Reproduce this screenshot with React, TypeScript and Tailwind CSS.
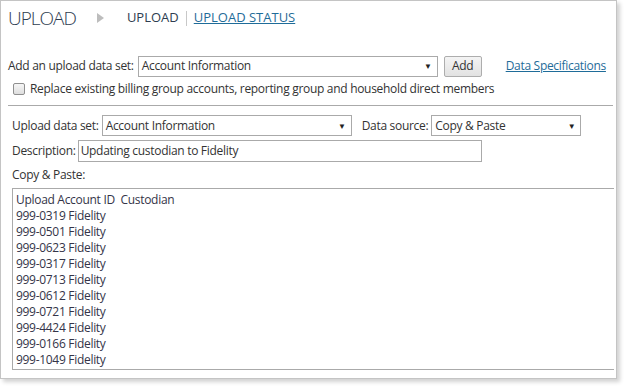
export default function App() {
  const rows = [
    "999-0319 Fidelity",
    "999-0501 Fidelity",
    "999-0623 Fidelity",
    "999-0317 Fidelity",
    "999-0713 Fidelity",
    "999-0612 Fidelity",
    "999-0721 Fidelity",
    "999-4424 Fidelity",
    "999-0166 Fidelity",
    "999-1049 Fidelity",
  ];

  return (
    <div className="w-[626px] h-[388px] bg-white font-['Open_Sans',sans-serif] text-[12px] tracking-[-0.3px] text-[#333] whitespace-nowrap">
      <div className="w-[617px] h-[379px] border border-[#c4c4c4] bg-white shadow-[3px_3px_4px_rgba(0,0,0,0.18)] overflow-hidden">
        {/* header */}
        <div className="flex items-center h-[34px] pl-[7px]">
          <span className="text-[19px] font-light text-[#2e3d50] tracking-[-1px]">UPLOAD</span>
          <span className="ml-[21px] mr-[23px] w-0 h-0 border-y-[5px] border-y-transparent border-l-[7px] border-l-[#bdbdbd]" />
          <span className="text-[13px] text-[#2e3d50] tracking-[0px]">UPLOAD</span>
          <span className="mx-[7px] w-px h-[15px] bg-[#c8c8c8]" />
          <span className="text-[13px] text-[#1f6c99] underline tracking-[0px]">UPLOAD STATUS</span>
        </div>

        <div className="pl-[7px] pt-[20px]">
          <div className="flex items-center h-[22px]">
            <span>Add an upload data set:</span>
            <div className="ml-[4px] w-[300px] h-[21px] border border-[#aaa] flex items-center justify-between px-[3px]">
              <span>Account Information</span>
              <span className="text-[8px] text-[#222] mr-[2px]">▼</span>
            </div>
            <button className="ml-[6px] w-[38px] h-[21px] border border-[#adadad] rounded-[2px] bg-gradient-to-b from-[#f4f4f4] to-[#e2e2e2] text-[#333]">
              Add
            </button>
            <span className="ml-[24px] text-[#1f6c99] underline">Data Specifications</span>
          </div>
          <div className="flex items-center mt-[3px] pl-[5px] h-[18px]">
            <span className="w-[12px] h-[12px] border border-[#8f8f8f] rounded-[2px] bg-gradient-to-b from-[#f6f6f6] to-[#dedede]" />
            <span className="ml-[5px]">Replace existing billing group accounts, reporting group and household direct members</span>
          </div>
        </div>

        <div className="ml-[7px] mr-[3px] mt-[7px] border-t border-[#aaa]" />

        <div className="pl-[11px] pt-[9px]">
          <div className="flex items-center h-[21px]">
            <span>Upload data set:</span>
            <div className="ml-[3px] w-[250px] h-[21px] border border-[#aaa] flex items-center justify-between px-[3px]">
              <span>Account Information</span>
              <span className="text-[8px] text-[#222] mr-[2px]">▼</span>
            </div>
            <span className="ml-[10px]">Data source:</span>
            <div className="ml-[3px] w-[150px] h-[21px] border border-[#aaa] flex items-center justify-between px-[3px]">
              <span>Copy &amp; Paste</span>
              <span className="text-[8px] text-[#222] mr-[2px]">▼</span>
            </div>
          </div>
          <div className="flex items-center h-[22px] mt-[4px]">
            <span>Description:</span>
            <div className="ml-[2px] w-[404px] h-[22px] border border-[#aaa] flex items-center px-[2px]">
              Updating custodian to Fidelity
            </div>
          </div>
          <div className="mt-[4px] h-[18px] flex items-center">Copy &amp; Paste:</div>
          <div className="mt-[4px] w-[602px] h-[182px] border border-r-0 border-[#aaa] pl-[3px] pt-[3px] leading-[16px] text-[#343448]">
            <div>Upload Account ID&nbsp; Custodian</div>
            {rows.map((r) => (
              <div key={r}>{r}</div>
            ))}
          </div>
        </div>
      </div>
    </div>
  );
}
